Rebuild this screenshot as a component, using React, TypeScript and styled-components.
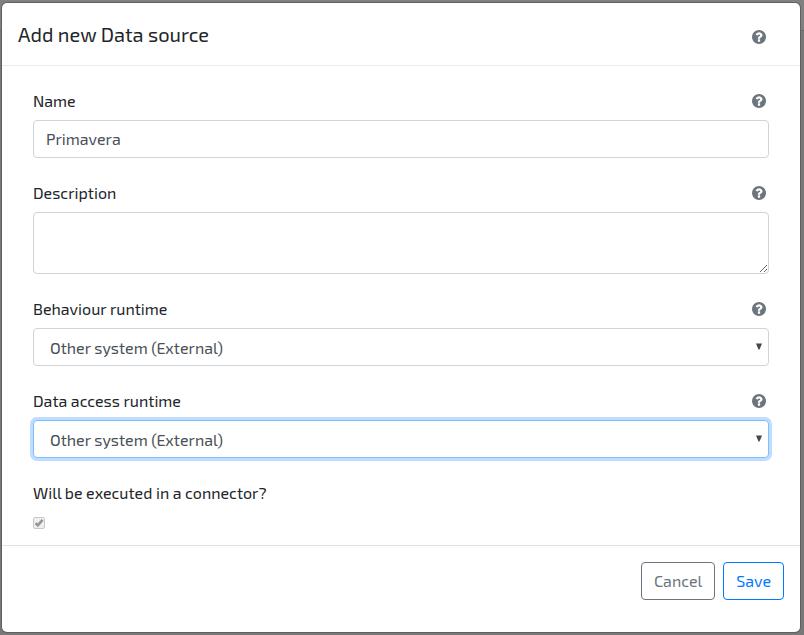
import React from "react";
import styled, { createGlobalStyle } from "styled-components";

const GlobalStyle = createGlobalStyle`
  *, *::before, *::after { box-sizing: border-box; }
  body {
    margin: 0;
    background: #787878;
    color: #212529;
    font-family: "Exo 2", Roboto, "Liberation Sans", sans-serif;
    font-size: 16px;
    line-height: 24px;
  }
`;

const Backdrop = styled.div`
  min-height: 100vh;
  padding: 3px 4px 3px 2px;
  background: linear-gradient(#808080 0 30px, #6a6a6a 30px 31px, #787878 31px);
`;

const Dialog = styled.form`
  background: #fff;
  border-radius: 5px;
  box-shadow: 0 0 0 1px #606060;
`;

const Header = styled.header`
  display: flex;
  align-items: flex-end;
  justify-content: space-between;
  padding: 16px 34px 16px 16px;
  border-bottom: 1px solid #e9ecef;
`;

const Title = styled.h5`
  margin: 0;
  font-size: 20px;
  font-weight: 400;
  line-height: 30px;
`;

const Body = styled.div`
  display: flex;
  flex-direction: column;
  gap: 23px;
  padding: 23px 31px 16px;
`;

const Field = styled.div`
  display: flex;
  flex-direction: column;
  gap: 7px;
`;

const LabelRow = styled.div`
  display: flex;
  align-items: center;
  justify-content: space-between;
  padding-right: 3px;
`;

const HelpButton = styled.button`
  display: flex;
  padding: 5px 0;
  border: 0;
  background: none;
  color: #6c757d;
`;

const controlStyle = `
  display: block;
  width: 100%;
  margin: 0;
  border: 1px solid #ced4da;
  border-radius: 4px;
  background: #fff;
  color: #495057;
  font: inherit;
  &:focus {
    border-color: #80bdff;
    outline: 0;
    box-shadow: 0 0 0 3px #bfdeff;
  }
`;

const TextInput = styled.input`
  ${controlStyle}
  height: 38px;
  padding: 5px 12px 7px;
`;

const TextArea = styled.textarea`
  ${controlStyle}
  height: 62px;
  padding: 6px 12px;
  resize: vertical;
`;

const SelectBox = styled.div`
  position: relative;
`;

const Select = styled.select`
  ${controlStyle}
  height: 38px;
  padding: 7px 16px 5px;
  appearance: none;
`;

const Arrow = styled.svg`
  position: absolute;
  top: 15px;
  right: 7px;
  pointer-events: none;
`;

const CheckBox = styled.span`
  position: relative;
  display: flex;
  width: 12px;
  height: 12px;
  margin: 5px 0 0;
`;

const CheckInput = styled.input`
  width: 12px;
  height: 12px;
  margin: 0;
  border: 1px solid #c9c9c9;
  border-radius: 2px;
  background: #f0f0f0;
  appearance: none;
`;

const Tick = styled.svg`
  position: absolute;
  inset: 0;
  pointer-events: none;
`;

const Footer = styled.footer`
  display: flex;
  justify-content: flex-end;
  gap: 8px;
  padding: 16px 16px 32px;
  border-top: 1px solid #e0e3e6;
`;

const Button = styled.button<{ $color: string }>`
  height: 38px;
  padding: 6px 12px;
  border: 1px solid ${(p) => p.$color};
  border-radius: 4px;
  background: transparent;
  color: ${(p) => p.$color};
  font: inherit;
`;

function Help({ topic }: { topic: string }) {
  return (
    <HelpButton type="button" aria-label={`Help: ${topic}`}>
      <svg width="14" height="14" viewBox="128 128 1536 1536" fill="currentColor" aria-hidden="true">
        <path d="M1024 1376v-192q0-14-9-23t-23-9h-192q-14 0-23 9t-9 23v192q0 14 9 23t23 9h192q14 0 23-9t9-23zm256-672q0-88-55.5-163t-138.5-116-170-41q-243 0-371 213-15 24 8 42l132 100q7 6 19 6 16 0 25-12 53-68 86-92 34-24 86-24 48 0 85.5 26t37.5 59q0 38-20 61t-68 45q-63 28-115.5 86.5t-52.5 125.5v36q0 14 9 23t23 9h192q14 0 23-9t9-23q0-19 21.5-49.5t54.5-49.5q32-18 49-28.5t46-35 44.5-48 28-60.5 12.5-81zm384 192q0 209-103 385.5t-279.5 279.5-385.5 103-385.5-103-279.5-279.5-103-385.5 103-385.5 279.5-279.5 385.5-103 385.5 103 279.5 279.5 103 385.5z" />
      </svg>
    </HelpButton>
  );
}

function FieldLabel({ id, text }: { id: string; text: string }) {
  return (
    <LabelRow>
      <label htmlFor={id}>{text}</label>
      <Help topic={text} />
    </LabelRow>
  );
}

function RuntimeSelect({ id, autoFocus }: { id: string; autoFocus?: boolean }) {
  return (
    <SelectBox>
      <Select id={id} autoFocus={autoFocus} defaultValue="external">
        <option value="external">Other system (External)</option>
      </Select>
      <Arrow width="6" height="7" viewBox="0 0 6 7" aria-hidden="true">
        <path d="M0 .5h6L3.5 6.5h-1z" fill="#41484f" />
      </Arrow>
    </SelectBox>
  );
}

export default function App() {
  return (
    <>
      <GlobalStyle />
      <Backdrop>
        <Dialog role="dialog" aria-labelledby="dialog-title" onSubmit={(e) => e.preventDefault()}>
          <Header>
            <Title id="dialog-title">Add new Data source</Title>
            <Help topic="Add new Data source" />
          </Header>
          <Body>
            <Field>
              <FieldLabel id="name" text="Name" />
              <TextInput id="name" type="text" defaultValue="Primavera" />
            </Field>
            <Field>
              <FieldLabel id="description" text="Description" />
              <TextArea id="description" />
            </Field>
            <Field>
              <FieldLabel id="behaviour" text="Behaviour runtime" />
              <RuntimeSelect id="behaviour" />
            </Field>
            <Field>
              <FieldLabel id="data-access" text="Data access runtime" />
              <RuntimeSelect id="data-access" autoFocus />
            </Field>
            <Field>
              <label htmlFor="connector">Will be executed in a connector?</label>
              <CheckBox>
                <CheckInput id="connector" type="checkbox" defaultChecked disabled />
                <Tick width="12" height="12" viewBox="0 0 12 12" aria-hidden="true">
                  <path d="M2.6 6.2 4.8 8.4 9.6 2.8" fill="none" stroke="#969696" strokeWidth="2.6" />
                </Tick>
              </CheckBox>
            </Field>
          </Body>
          <Footer>
            <Button type="button" $color="#6c757d">Cancel</Button>
            <Button type="submit" $color="#007bff">Save</Button>
          </Footer>
        </Dialog>
      </Backdrop>
    </>
  );
}
